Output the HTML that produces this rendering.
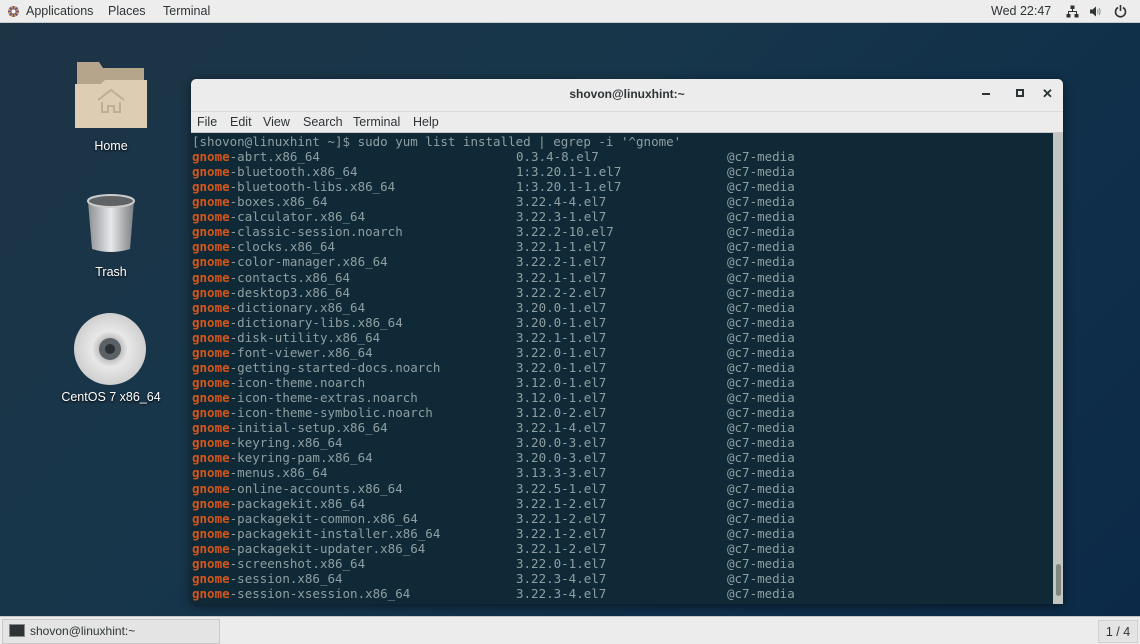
<!DOCTYPE html>
<html><head><meta charset="utf-8"><style>
*{margin:0;padding:0;box-sizing:border-box}
body{width:1140px;height:644px;overflow:hidden;position:relative;font-family:"Liberation Sans",sans-serif;background:linear-gradient(135deg,#1d3445 0%,#17364b 40%,#0f2f4a 70%,#0c2a47 100%)}
.top{position:absolute;left:0;top:0;width:1140px;height:23px;background:#ededed;border-bottom:1px solid #c9c9c9;font-size:12.5px;color:#2e3436}
.top span{position:absolute;top:4px}
.icon{position:absolute;text-align:center;color:#fff;font-size:12.5px;width:120px;text-shadow:0 1px 2px #000}
.win{position:absolute;left:191px;top:79px;width:872px;height:525px;background:#0f2a36;border-radius:5px 5px 0 0;overflow:hidden;box-shadow:0 2px 10px rgba(0,0,0,.5)}
.title{height:32px;background:#ececec;text-align:center;font-size:12px;font-weight:bold;color:#2e3436;line-height:30px;position:relative}
.menu{height:22px;background:#ececec;border-top:1px solid #dcdcdc;border-bottom:1px solid #c8c8c8;font-size:12.5px;color:#2e3436;position:relative}
.menu span{position:absolute;top:3px}
.term{position:relative;height:471px;background:#0f2a36;font-family:"DejaVu Sans Mono","Liberation Mono",monospace;font-size:12.5px;color:#8e9fa2}
.ln{position:absolute;left:1px;height:15px;line-height:15px;white-space:pre}
.o{color:#d3561c;font-weight:bold}
.sb{position:absolute;right:0;top:0;width:10px;height:471px;background:#c3c5c3}
.th{position:absolute;left:3px;top:431px;width:5px;height:32px;background:#7f8780;border-radius:3px}
.task{position:absolute;left:0;top:616px;width:1140px;height:28px;background:#ececec;border-top:1px solid #c4c4c4}
</style></head><body>
<div class="top">
<svg style="position:absolute;left:7px;top:5px" width="13" height="13" viewBox="0 0 13 13"><circle cx="6.5" cy="6.5" r="5.5" fill="#c6a15a"/><path d="M6.5 1v11M1 6.5h11M2.6 2.6l7.8 7.8M10.4 2.6l-7.8 7.8" stroke="#6b4e8c" stroke-width="1.6"/><circle cx="6.5" cy="6.5" r="2" fill="#fff"/></svg>
<span style="left:26px">Applications</span><span style="left:108px">Places</span><span style="left:163px">Terminal</span>
<span style="left:991px">Wed 22:47</span>
<svg style="position:absolute;left:1066px;top:5px" width="13" height="13" viewBox="0 0 13 13" fill="#2e3436"><rect x="4.5" y="0.5" width="4" height="3.5"/><rect x="0.5" y="9" width="4" height="3.5"/><rect x="8.5" y="9" width="4" height="3.5"/><path d="M6.5 4v3M2.5 9V6.5h8V9" stroke="#2e3436" fill="none"/></svg>
<svg style="position:absolute;left:1089px;top:5px" width="13" height="13" viewBox="0 0 13 13"><path d="M1 4.5h2.5L7 1.5v10L3.5 8.5H1z" fill="#2e3436"/><path d="M8.5 4.5q1.2 2-0 4M10 3q2.2 3.5 0 7" stroke="#888" fill="none"/></svg>
<svg style="position:absolute;left:1114px;top:4px" width="13" height="14" viewBox="0 0 13 14"><path d="M4 3.5A5 5 0 1 0 9 3.5" stroke="#2e3436" stroke-width="1.6" fill="none"/><path d="M6.5 1v6" stroke="#2e3436" stroke-width="1.6"/></svg>
</div>

<svg style="position:absolute;left:75px;top:62px" width="72" height="68" viewBox="0 0 72 68"><path d="M2 0h22l4 6h41v60H2z" fill="#b5a58a"/><path d="M0 22h26l4-4h42v48H0z" fill="#dccdb3"/><path d="M23 38l13-10 13 10" stroke="#bfae92" stroke-width="2" fill="none"/><path d="M27 40v10h6v-6h6v6h6V40" stroke="#bfae92" stroke-width="2" fill="none"/></svg>
<div class="icon" style="left:51px;top:139px">Home</div>
<svg style="position:absolute;left:85px;top:193px" width="52" height="60" viewBox="0 0 52 60"><defs><linearGradient id="tg" x1="0" x2="1"><stop offset="0" stop-color="#8c8f92"/><stop offset=".5" stop-color="#e6e8ea"/><stop offset="1" stop-color="#7b7e81"/></linearGradient></defs><path d="M3 8h46l-4 48q-19 6-38 0z" fill="url(#tg)"/><ellipse cx="26" cy="8" rx="23" ry="6" fill="#5f6366" stroke="#ccc" stroke-width="2"/></svg>
<div class="icon" style="left:51px;top:265px">Trash</div>
<svg style="position:absolute;left:73px;top:312px" width="74" height="74" viewBox="0 0 74 74"><defs><radialGradient id="cd"><stop offset=".2" stop-color="#aaa"/><stop offset=".5" stop-color="#e8e8e8"/><stop offset="1" stop-color="#cfcfcf"/></radialGradient></defs><circle cx="37" cy="37" r="36" fill="url(#cd)"/><circle cx="37" cy="37" r="11" fill="#5a6166"/><circle cx="37" cy="37" r="5" fill="#2a3034"/></svg>
<div class="icon" style="left:51px;top:390px">CentOS 7 x86_64</div>

<div class="win">
<div class="title">shovon@linuxhint:~
<span style="position:absolute;left:791px;top:14px;width:8px;height:2px;background:#2e3436"></span>
<span style="position:absolute;left:825px;top:10px;width:8px;height:8px;border:2px solid #2e3436"></span>
<span style="position:absolute;left:851px;top:0;font-size:13px">✕</span>
</div>
<div class="menu"><span style="left:6px">File</span><span style="left:39px">Edit</span><span style="left:72px">View</span><span style="left:112px">Search</span><span style="left:162px">Terminal</span><span style="left:222px">Help</span></div>
<div class="term" id="t">
<div class="sb"><div class="th"></div></div>
</div>
</div>

<div class="task">
<div style="position:absolute;left:2px;top:2px;width:218px;height:25px;border:1px solid #c8c8c8;background:#e4e4e4"></div>
<div style="position:absolute;left:9px;top:7px;width:16px;height:13px;background:#2e3436;border:1px solid #888"></div>
<span style="position:absolute;left:30px;top:7px;font-size:12px;color:#2e3436">shovon@linuxhint:~</span>
<div style="position:absolute;left:1098px;top:3px;width:40px;height:23px;border:1px solid #d0d0d0;background:#e4e4e4;font-size:12.5px;color:#2e3436;text-align:center;line-height:22px">1 / 4</div>
</div>

<script>
var d=[["abrt.x86_64","0.3.4-8.el7"],["bluetooth.x86_64","1:3.20.1-1.el7"],["bluetooth-libs.x86_64","1:3.20.1-1.el7"],["boxes.x86_64","3.22.4-4.el7"],["calculator.x86_64","3.22.3-1.el7"],["classic-session.noarch","3.22.2-10.el7"],["clocks.x86_64","3.22.1-1.el7"],["color-manager.x86_64","3.22.2-1.el7"],["contacts.x86_64","3.22.1-1.el7"],["desktop3.x86_64","3.22.2-2.el7"],["dictionary.x86_64","3.20.0-1.el7"],["dictionary-libs.x86_64","3.20.0-1.el7"],["disk-utility.x86_64","3.22.1-1.el7"],["font-viewer.x86_64","3.22.0-1.el7"],["getting-started-docs.noarch","3.22.0-1.el7"],["icon-theme.noarch","3.12.0-1.el7"],["icon-theme-extras.noarch","3.12.0-1.el7"],["icon-theme-symbolic.noarch","3.12.0-2.el7"],["initial-setup.x86_64","3.22.1-4.el7"],["keyring.x86_64","3.20.0-3.el7"],["keyring-pam.x86_64","3.20.0-3.el7"],["menus.x86_64","3.13.3-3.el7"],["online-accounts.x86_64","3.22.5-1.el7"],["packagekit.x86_64","3.22.1-2.el7"],["packagekit-common.x86_64","3.22.1-2.el7"],["packagekit-installer.x86_64","3.22.1-2.el7"],["packagekit-updater.x86_64","3.22.1-2.el7"],["screenshot.x86_64","3.22.0-1.el7"],["session.x86_64","3.22.3-4.el7"],["session-xsession.x86_64","3.22.3-4.el7"]];
var h='<div class="ln" style="top:1px">[shovon@linuxhint ~]$ sudo yum list installed | egrep -i \'^gnome\'</div>';
for(var i=0;i<d.length;i++){var y=16+i*15.07;
h+='<div class="ln" style="top:'+y+'px"><span class="o">gnome</span>-'+d[i][0]+'</div>';
h+='<div class="ln" style="top:'+y+'px;left:325px">'+d[i][1]+'</div>';
h+='<div class="ln" style="top:'+y+'px;left:536px">@c7-media</div>';}
document.getElementById('t').insertAdjacentHTML('beforeend',h);
</script>
</body></html>
